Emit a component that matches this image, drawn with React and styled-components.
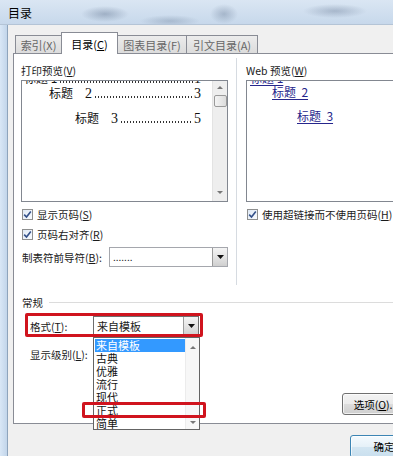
import React from 'react';
import styled, { createGlobalStyle } from 'styled-components';

const GlobalStyle = createGlobalStyle`
    html, body {
        margin: 0;
        padding: 0;
        background: #cfdeee;
    }
    body {
        font-family: "Noto Sans CJK SC", "Noto Sans", sans-serif;
        font-size: 10.5px;
        color: #1a1a1a;
    }
`

const Screen = styled.div`
    width: 393px;
    height: 456px;
    overflow: hidden;
    background: #cfdeee;
`
const Window = styled.div`
    width: 430px;
    height: 456px;
    display: flex;
    flex-direction: column;
`
const TitleBar = styled.div`
    height: 24px;
    flex-shrink: 0;
    display: flex;
    align-items: center;
    padding-left: 8px;
    font-size: 12px;
    color: #000;
    border-bottom: 1px solid #b4c4d6;
    background:
        radial-gradient(ellipse 24px 8px at 105px 14px, rgba(70, 90, 120, 0.35), transparent),
        radial-gradient(ellipse 30px 6px at 170px 21px, rgba(70, 90, 120, 0.25), transparent),
        radial-gradient(ellipse 14px 10px at 224px 14px, rgba(70, 90, 120, 0.3), transparent),
        radial-gradient(ellipse 32px 7px at 335px 11px, rgba(70, 90, 120, 0.3), transparent),
        linear-gradient(#dae6f3, #c7d8eb);
`
const Body = styled.div`
    flex: 1;
    display: flex;
`
const FrameEdge = styled.div`
    width: 7px;
    background: linear-gradient(to right, #d9e7f6, #c2d5ea);
    border-right: 1px solid #8ea4bc;
`
const Dialog = styled.div`
    flex: 1;
    background: #f0f0f0;
    padding: 7px 0 0 5px;
    display: flex;
    flex-direction: column;
`

/* tabs */
const TabStrip = styled.div`
    display: flex;
    align-items: flex-end;
    height: 22px;
    padding-left: 2px;
    margin-bottom: -1px;
    position: relative;
    z-index: 1;
`
const Tab = styled.div`
    box-sizing: border-box;
    width: ${p => p.w}px;
    height: ${p => p.active ? 22 : 18}px;
    margin-bottom: ${p => p.active ? 0 : 1}px;
    margin-right: -1px;
    border: 1px solid #898c95;
    border-bottom: none;
    display: flex;
    align-items: center;
    justify-content: center;
    font-size: 11px;
    color: ${p => p.active ? '#000' : '#666'};
    background: ${p => p.active ? '#fff' : 'linear-gradient(#ececec, #dcdcdc)'};
    position: relative;
    z-index: ${p => p.active ? 2 : 1};
`

const Panel = styled.div`
    box-sizing: border-box;
    height: 371px;
    border: 1px solid #898c95;
    border-right: none;
    background: #fff;
    display: flex;
    flex-direction: column;
    position: relative;
`
const TopSection = styled.div`
    box-sizing: border-box;
    height: 231px;
    padding: 10px 0 0 7px;
    display: flex;
`
const Column = styled.div`
    display: flex;
    flex-direction: column;
    width: ${p => p.w ? `${p.w}px` : 'auto'};
    flex: ${p => p.w ? 'none' : 1};
    padding-right: ${p => p.w ? 0 : 18}px;
`
const Divider = styled.div`
    width: 1px;
    height: 227px;
    margin: -6px 9px 0 8px;
    background: #d6dbe1;
`
const Label = styled.div`
    line-height: 14px;
    height: 14px;
    margin-bottom: 2px;
    white-space: nowrap;
`
const PreviewBox = styled.div`
    box-sizing: border-box;
    height: 122px;
    border: 1px solid #828790;
    display: flex;
    overflow: hidden;
`
const PreviewPane = styled.div`
    flex: 1;
    overflow: hidden;
    padding-right: 11px;
`
const PrintLine = styled.div`
    display: flex;
    align-items: baseline;
    white-space: nowrap;
    padding-left: ${p => p.indent}px;
    margin-top: ${p => p.mt || 0}px;
    line-height: ${p => p.lh || 16}px;
    font-size: 12px;
    color: #111;
`
const Num = styled.span`
    font-family: "Liberation Serif", serif;
    font-size: 14px;
    margin-left: ${p => p.ml || 0}px;
`
const Leader = styled.span`
    flex: 1;
    display: block;
    height: 2px;
    margin: 0 1px 0 2px;
    background-image: radial-gradient(circle, #333 0.55px, transparent 0.9px);
    background-size: 3px 2px;
    background-repeat: repeat-x;
`
const WebLine = styled.div`
    white-space: nowrap;
    padding-left: ${p => p.indent}px;
    margin-top: ${p => p.mt || 0}px;
    line-height: ${p => p.lh || 16}px;
    font-size: 12px;
    color: #26268c;
    & span {
        text-decoration: underline;
        text-underline-offset: 2px;
    }
`
const ScrollBar = styled.div`
    width: 15px;
    flex-shrink: 0;
    background: #eeeeee;
    border-left: 1px solid #e3e3e3;
    display: flex;
    flex-direction: column;
    align-items: center;
    padding-top: 5px;
    box-sizing: border-box;
`
const Arrow = styled.div`
    width: 0;
    height: 0;
    border-left: 3px solid transparent;
    border-right: 3px solid transparent;
    ${p => p.down
        ? 'border-top: 3px solid #777;'
        : 'border-bottom: 3px solid #777;'}
    margin-top: ${p => p.mt || 0}px;
`
const Thumb = styled.div`
    box-sizing: border-box;
    width: 13px;
    height: 12px;
    margin-top: 6px;
    border: 1px solid #9a9a9a;
    border-radius: 2px;
    background: linear-gradient(to right, #f4f4f4, #dcdcdc);
`

const CheckRow = styled.div`
    display: flex;
    align-items: center;
    height: 16px;
    margin-top: 4px;
    padding-left: 1px;
    white-space: nowrap;
`
const Box = styled.div`
    box-sizing: border-box;
    width: 11px;
    height: 11px;
    margin-right: 4px;
    border: 1px solid #8e8f8f;
    background: linear-gradient(135deg, #dfe9f5, #f8fbff);
    display: flex;
    align-items: center;
    justify-content: center;
    flex-shrink: 0;
`

const FieldRow = styled.div`
    display: flex;
    align-items: center;
    height: ${p => p.h || 20}px;
    margin-top: ${p => p.mt}px;
    padding-left: ${p => p.pl || 0}px;
    white-space: nowrap;
`
const FieldLabel = styled.div`
    width: ${p => p.w}px;
    flex-shrink: 0;
`
const Combo = styled.div`
    box-sizing: border-box;
    width: ${p => p.w}px;
    height: 20px;
    border: 1px solid ${p => p.dark ? '#6e6e6e' : '#a5a7ad'};
    display: flex;
    background: #fff;
`
const ComboValue = styled.div`
    flex: 1;
    padding-left: 3px;
    line-height: 18px;
    font-size: ${p => p.small ? 10 : 11}px;
`
const ComboButton = styled.div`
    width: 14px;
    border-left: 1px solid #9b9b9b;
    background: linear-gradient(#f4f4f4, #e4e4e4 50%, #cfcfcf);
    display: flex;
    align-items: center;
    justify-content: center;
`

const GroupHeader = styled.div`
    display: flex;
    align-items: center;
    height: 14px;
    margin-top: 10px;
    padding-left: 8px;
    &::after {
        content: '';
        flex: 1;
        height: 1px;
        margin-left: 6px;
        background: #dcdcdc;
    }
`
const OptionsRow = styled.div`
    margin-top: auto;
    padding: 0 20px 8px 0;
    display: flex;
    justify-content: flex-end;
`
const Button = styled.div`
    box-sizing: border-box;
    width: 68px;
    height: ${p => p.h || 22}px;
    border: 1px solid ${p => p.primary ? '#3c85b4' : '#707070'};
    border-radius: 3px;
    display: flex;
    align-items: center;
    justify-content: center;
    color: #000;
    background: ${p => p.primary
        ? 'linear-gradient(#f4fafe, #e6f1f8 50%, #d3e6f2 50%, #c9dfee)'
        : 'linear-gradient(#f3f3f3, #ebebeb 50%, #dddddd 50%, #cfcfcf)'};
    box-shadow: inset 0 0 0 1px rgba(255,255,255,0.7);
`
const Footer = styled.div`
    display: flex;
    justify-content: flex-end;
    padding: 11px 12px 0 0;
`

/* overlays */
const DropList = styled.div`
    position: absolute;
    left: 79px;
    top: 283px;
    width: 107px;
    height: 93px;
    box-sizing: border-box;
    border: 1px solid #646464;
    background: #fff;
    display: flex;
    z-index: 3;
`
const DropItems = styled.div`
    flex: 1;
    padding: 1px 0 0 1px;
`
const DropItem = styled.div`
    height: 13px;
    line-height: 13px;
    padding-left: 1px;
    font-size: 11px;
    white-space: nowrap;
    color: ${p => p.selected ? '#fff' : '#111'};
    background: ${p => p.selected ? '#3399ff' : 'transparent'};
`
const DropScroll = styled.div`
    width: 14px;
    background: #f7f7f7;
    border-left: 1px solid #ececec;
    display: flex;
    flex-direction: column;
    align-items: center;
    justify-content: space-between;
    padding: 8px 0 5px;
    box-sizing: border-box;
`
const Mark = styled.div`
    position: absolute;
    left: ${p => p.x}px;
    top: ${p => p.y}px;
    width: ${p => p.w}px;
    height: ${p => p.h}px;
    box-sizing: border-box;
    border: 3px solid #d0141e;
    border-radius: 2px;
    z-index: 4;
    pointer-events: none;
`

const Check = () => (
    <svg width="9" height="9" viewBox="0 0 9 9">
        <path d="M1.2 4.6 L3.5 7 L7.8 1.4" fill="none" stroke="#33508a" strokeWidth="1.6" />
    </svg>
);

const Checkbox = ({ children }) => (
    <CheckRow>
        <Box><Check /></Box>
        <span>{children}</span>
    </CheckRow>
);

const DropTriangle = () => (
    <svg width="7" height="4" viewBox="0 0 7 4">
        <path d="M0 0 H7 L3.5 4 Z" fill="#111" />
    </svg>
);

const styles = ['来自模板', '古典', '优雅', '流行', '现代', '正式', '简单'];

export default function App() {
    return (
        <Screen>
            <GlobalStyle />
            <Window>
                <TitleBar>目录</TitleBar>
                <Body>
                    <FrameEdge />
                    <Dialog>
                        <TabStrip>
                            <Tab w={47}>索引(X)</Tab>
                            <Tab w={57} active>目录(<u>C</u>)</Tab>
                            <Tab w={70}>图表目录(F)</Tab>
                            <Tab w={72}>引文目录(A)</Tab>
                        </TabStrip>
                        <Panel>
                            <TopSection>
                                <Column w={207}>
                                    <Label>打印预览(<u>V</u>)</Label>
                                    <PreviewBox>
                                        <PreviewPane>
                                            <PrintLine indent={2} mt={-9} lh={12}>
                                                标题 1<Leader /><Num>1</Num>
                                            </PrintLine>
                                            <PrintLine indent={27}>
                                                标题<Num ml={12}>2</Num><Leader /><Num>3</Num>
                                            </PrintLine>
                                            <PrintLine indent={53} mt={8}>
                                                标题<Num ml={12}>3</Num><Leader /><Num>5</Num>
                                            </PrintLine>
                                        </PreviewPane>
                                        <ScrollBar>
                                            <Arrow />
                                            <Thumb />
                                            <Arrow down mt={84} />
                                        </ScrollBar>
                                    </PreviewBox>
                                    <Checkbox>显示页码(<u>S</u>)</Checkbox>
                                    <Checkbox>页码右对齐(<u>R</u>)</Checkbox>
                                    <FieldRow mt={5} pl={1}>
                                        <FieldLabel w={87}>制表符前导符(<u>B</u>):</FieldLabel>
                                        <Combo w={119}>
                                            <ComboValue small>.......</ComboValue>
                                            <ComboButton><DropTriangle /></ComboButton>
                                        </Combo>
                                    </FieldRow>
                                </Column>
                                <Divider />
                                <Column>
                                    <Label>Web 预览(<u>W</u>)</Label>
                                    <PreviewBox>
                                        <PreviewPane>
                                            <WebLine indent={3} mt={-9} lh={12}><span>标题 1</span></WebLine>
                                            <WebLine indent={25}><span>标题&nbsp;&nbsp;2</span></WebLine>
                                            <WebLine indent={50} mt={8}><span>标题&nbsp;&nbsp;3</span></WebLine>
                                        </PreviewPane>
                                    </PreviewBox>
                                    <Checkbox>使用超链接而不使用页码(<u>H</u>)</Checkbox>
                                </Column>
                            </TopSection>

                            <GroupHeader>常规</GroupHeader>
                            <FieldRow mt={7} pl={16}>
                                <FieldLabel w={63}>格式(<u>T</u>):</FieldLabel>
                                <Combo w={106} dark>
                                    <ComboValue>来自模板</ComboValue>
                                    <ComboButton><DropTriangle /></ComboButton>
                                </Combo>
                            </FieldRow>
                            <FieldRow mt={11} pl={16} h={14}>
                                <FieldLabel w={63}>显示级别(<u>L</u>):</FieldLabel>
                            </FieldRow>

                            <OptionsRow>
                                <Button>选项(<u>O</u>)...</Button>
                            </OptionsRow>

                            <DropList>
                                <DropItems>
                                    {styles.map((s, i) => (
                                        <DropItem key={s} selected={i === 0}>{s}</DropItem>
                                    ))}
                                </DropItems>
                                <DropScroll>
                                    <Arrow />
                                    <Arrow down />
                                </DropScroll>
                            </DropList>
                            <Mark x={11} y={259} w={178} h={24} />
                            <Mark x={68} y={348} w={124} h={16} />
                        </Panel>
                        <Footer>
                            <Button primary h={23}>确定</Button>
                        </Footer>
                    </Dialog>
                </Body>
            </Window>
        </Screen>
    );
}
